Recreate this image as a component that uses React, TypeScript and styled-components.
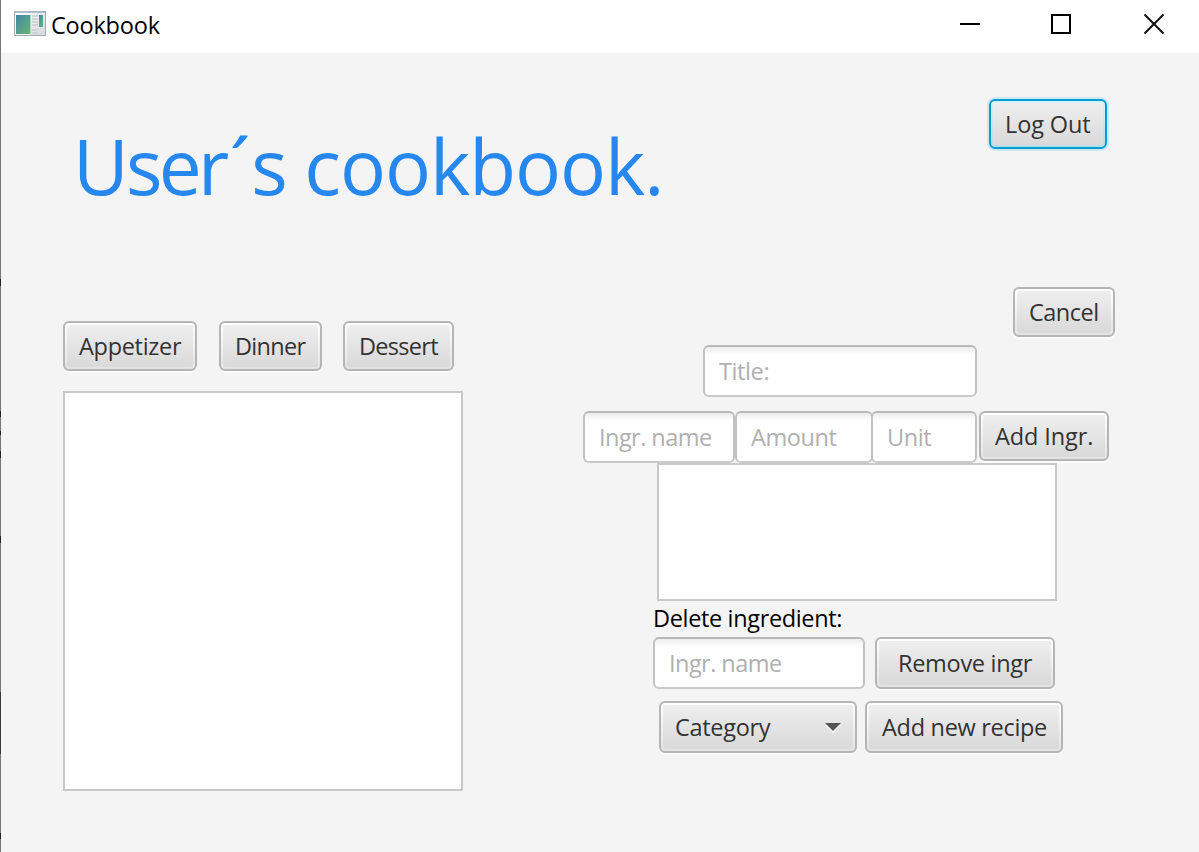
import React from "react";
import styled, { createGlobalStyle, css } from "styled-components";

const GlobalStyle = createGlobalStyle`
  * { box-sizing: border-box; }
  body { margin: 0; overflow: hidden; font-family: "Open Sans", "Noto Sans", sans-serif; }
`;

const Window = styled.div`
  display: grid;
  grid-template-columns: 1px 1fr;
  width: 1199px;
  height: 852px;
  background: #f4f4f4;
`;

const WindowEdge = styled.div`
  background: linear-gradient(
    #777 279px, #222 279px 286px, #777 286px 411px, #222 411px 417px, #777 417px 431px,
    #222 431px 435px, #777 435px 451px, #222 451px 458px, #777 458px 536px, #222 536px 543px,
    #777 543px 692px, #3a3a3a 692px 754px, #777 754px 833px, #222 833px 839px, #777 839px
  );
`;

const Content = styled.div`
  display: flex;
  flex-direction: column;
  min-width: 0;
`;

const TitleBar = styled.header`
  display: flex;
  height: 53px;
  padding: 0 34px 0 13px;
  background: #fff;
`;

const Brand = styled.div`
  display: flex;
  flex: 1;
  padding-top: 10px;
`;

const Text = styled.span<{ $spacing?: number }>`
  font-size: 23.5px;
  line-height: 32px;
  letter-spacing: ${(p) => p.$spacing ?? 0}px;
  white-space: pre;
`;

const BrandName = styled(Text)`
  margin: -1px 0 0 5px;
  color: #000;
`;

const WindowControls = styled.div`
  display: flex;
  gap: 70px;
  padding-top: 13px;

  & > :last-child { margin-left: 1px; }
`;

const PageHeader = styled.div`
  display: flex;
  justify-content: space-between;
  height: 234px;
  padding: 46px 92px 0 72px;
`;

const Heading = styled.h1`
  margin: 13px 0 0;
  color: #2687ee;
  font-size: 76.5px;
  font-weight: 400;
  line-height: 107px;
  white-space: pre;
`;

const HeadingPart = styled.span<{ $spacing: number }>`
  letter-spacing: ${(p) => p.$spacing}px;
`;

const Columns = styled.main`
  display: flex;
  justify-content: space-between;
  padding: 0 84px 0 62px;
`;

const RecipePanel = styled.section`
  padding-top: 34px;
`;

const CategoryRow = styled.div`
  display: flex;
  margin-bottom: 20px;

  & > :nth-child(2) { margin: 0 21px 0 22px; }
`;

const Editor = styled.section`
  display: flex;
  flex-direction: column;
  width: 532px;
`;

const Row = styled.div<{ $left?: number; $top?: number; $gap?: number }>`
  display: flex;
  gap: ${(p) => p.$gap ?? 0}px;
  margin: ${(p) => p.$top ?? 0}px 0 0 ${(p) => p.$left ?? 0}px;
`;

const ListBox = styled.div<{ $width: number; $height: number }>`
  width: ${(p) => p.$width}px;
  height: ${(p) => p.$height}px;
  border: 2px solid #c8c8c8;
  background: #fff;
`;

const focusRing = css`
  border-color: #039ed3;
  background: linear-gradient(#d9f0f8, #b9dbe6);
  box-shadow: 0 0 0 2px #cfe8f1;
`;

const ButtonFrame = styled.button<{ $width: number; $height: number; $focused?: boolean }>`
  display: flex;
  flex: none;
  width: ${(p) => p.$width}px;
  height: ${(p) => p.$height}px;
  padding: 2px;
  border: 2px solid #b5b5b5;
  border-radius: 6px;
  background: linear-gradient(#fff, #e3e3e3);
  box-shadow: 0 2px 0 #fbfbfb;
  font-family: inherit;
  color: #333;
  ${(p) => p.$focused && focusRing}
`;

const ButtonFace = styled.span<{ $pad: number }>`
  display: flex;
  flex: 1;
  align-items: center;
  height: 100%;
  padding: 0 0 0 ${(p) => p.$pad}px;
  border-radius: 3px;
  background: linear-gradient(#eeeeee, #d9d9d9);
`;

const Arrow = styled.svg`
  margin: 2px 12px 0 auto;
`;

const Field = styled.input<{ $width: number; $spacing?: number; $overlap?: number }>`
  flex: none;
  width: ${(p) => p.$width}px;
  height: 52px;
  margin-left: ${(p) => -(p.$overlap ?? 0)}px;
  padding: 0 0 0 14px;
  border: 2px solid;
  border-color: #b8b8b8 #c2c2c2 #cacaca;
  border-radius: 6px;
  outline: none;
  background: linear-gradient(#ececec, #fff 8px);
  font-family: inherit;
  font-size: 23.5px;
  letter-spacing: ${(p) => p.$spacing ?? 0}px;

  &::placeholder { color: #b0b0b0; opacity: 1; }
`;

const Caption = styled(Text)`
  height: 36px;
  margin-left: 70px;
  padding-top: 1px;
  color: #000;
`;

type ButtonProps = {
  label: string;
  width: number;
  height?: number;
  pad?: number;
  spacing?: number;
  focused?: boolean;
  menu?: boolean;
};

const Button = ({ label, width, height = 50, pad = 12, spacing = 0, focused, menu }: ButtonProps) => (
  <ButtonFrame type="button" $width={width} $height={height} $focused={focused}>
    <ButtonFace $pad={pad}>
      <Text $spacing={spacing}>{label}</Text>
      {menu && (
        <Arrow width="16" height="10" viewBox="0 0 16 10">
          <path d="M0 2H16L8 10Z" fill="#fafafa" />
          <path d="M0 0H16L8 8Z" fill="#555" />
        </Arrow>
      )}
    </ButtonFace>
  </ButtonFrame>
);

const AppIcon = () => (
  <svg width="32" height="27" viewBox="0 0 32 27">
    <defs>
      <linearGradient id="pane" x1="0" y1="0" x2="1" y2="1">
        <stop stopColor="#4289a5" />
        <stop offset="1" stopColor="#66b575" />
      </linearGradient>
      <linearGradient id="shell" x1="0" y1="0" x2="1" y2="1">
        <stop stopColor="#fff" />
        <stop offset="1" stopColor="#d4d7db" />
      </linearGradient>
    </defs>
    <rect x="0.5" y="1.5" width="31" height="24" fill="url(#shell)" stroke="#a5a9ae" />
    <path d="M1 2H31" stroke="#aebdcb" strokeWidth="2" />
    <rect x="1.5" y="4.5" width="15.5" height="20" fill="#fff" />
    <rect x="2" y="5" width="14.5" height="19" fill="url(#pane)" />
    <path d="M18 6H24M18 9H24M18 12H24M18 15H24M18 20H24M18 23H24" stroke="#c9cccf" strokeWidth="1.5" />
    <rect x="25" y="5" width="4" height="12" fill="url(#pane)" />
  </svg>
);

export default function App() {
  return (
    <>
      <GlobalStyle />
      <Window>
        <WindowEdge />
        <Content>
          <TitleBar>
            <Brand>
              <AppIcon />
              <BrandName $spacing={-0.2}>Cookbook</BrandName>
            </Brand>
            <WindowControls>
              <svg width="20" height="22" viewBox="0 0 20 22"><path d="M0 11H20" stroke="#000" strokeWidth="2" /></svg>
              <svg width="22" height="22" viewBox="0 0 22 22"><path d="M2 2H20V20H2Z" fill="none" stroke="#000" strokeWidth="2" /></svg>
              <svg width="22" height="22" viewBox="0 0 22 22"><path d="M1.5 1.5L20.5 20.5M20.5 1.5L1.5 20.5" stroke="#111" strokeWidth="2" /></svg>
            </WindowControls>
          </TitleBar>
          <PageHeader>
            <Heading>
              <HeadingPart $spacing={-2.9}>U</HeadingPart>
              <HeadingPart $spacing={-3.7}>se</HeadingPart>
              <HeadingPart $spacing={0.4}>r´</HeadingPart>
              <HeadingPart $spacing={-1.6}>s </HeadingPart>
              <HeadingPart $spacing={-1}>cookbook.</HeadingPart>
            </Heading>
            <Button label="Log Out" width={118} spacing={-0.1} focused />
          </PageHeader>
          <Columns>
            <RecipePanel>
              <CategoryRow>
                <Button label="Appetizer" width={134} spacing={-0.3} />
                <Button label="Dinner" width={103} spacing={-0.7} />
                <Button label="Dessert" width={111} spacing={-0.7} />
              </CategoryRow>
              <ListBox $width={400} $height={400} />
            </RecipePanel>
            <Editor>
              <Row $left={430}>
                <Button label="Cancel" width={102} spacing={-0.5} />
              </Row>
              <Row $left={120} $top={8}>
                <Field $width={274} $spacing={-0.4} placeholder="Title:" />
              </Row>
              <Row $top={14}>
                <Field $width={152} $spacing={-0.55} placeholder="Ingr. name" />
                <Field $width={138} $spacing={-0.4} placeholder="Amount" />
                <Field $width={106} $spacing={-0.4} $overlap={2} placeholder="Unit" />
                <Row $left={2}>
                  <Button label="Add Ingr." width={130} spacing={-0.1} />
                </Row>
              </Row>
              <Row $left={74}>
                <ListBox $width={400} $height={138} />
              </Row>
              <Caption $spacing={-0.35}>Delete ingredient:</Caption>
              <Row $left={70} $gap={10}>
                <Field $width={212} $spacing={-0.55} placeholder="Ingr. name" />
                <Button label="Remove ingr" width={180} height={52} pad={19} spacing={-0.3} />
              </Row>
              <Row $left={76} $top={12} $gap={8}>
                <Button label="Category" width={198} height={52} spacing={-0.3} menu />
                <Button label="Add new recipe" width={198} height={52} pad={13} spacing={-0.3} />
              </Row>
            </Editor>
          </Columns>
        </Content>
      </Window>
    </>
  );
}
